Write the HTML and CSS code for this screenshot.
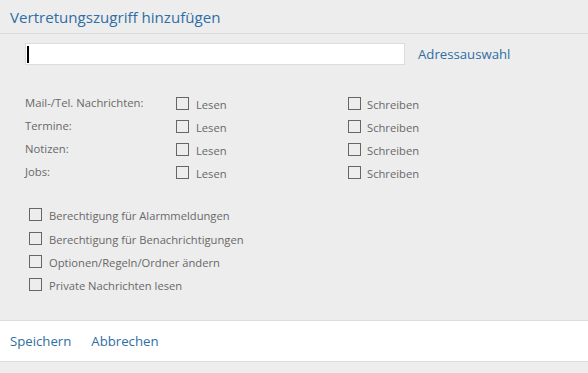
FILE: index.html
```html
<!DOCTYPE html>
<html lang="de">
<head>
    <meta charset="UTF-8">
    <title>Vertretungszugriff hinzufügen</title>
    <link rel="stylesheet" href="styles.css">
</head>
<body>
    <div class="dialog">
        <header class="title-bar">
            <h1>Vertretungszugriff hinzufügen</h1>
        </header>

        <!-- Person -->
        <div class="picker">
            <div class="input-box"><span class="caret"></span></div>
            <a class="link" href="#">Adressauswahl</a>
        </div>

        <!-- Folder permissions -->
        <div class="perm-grid">
            <span class="perm-label">Mail-/Tel. Nachrichten:</span>
            <label class="check"><span class="box"></span>Lesen</label>
            <label class="check"><span class="box"></span>Schreiben</label>

            <span class="perm-label">Termine:</span>
            <label class="check"><span class="box"></span>Lesen</label>
            <label class="check"><span class="box"></span>Schreiben</label>

            <span class="perm-label">Notizen:</span>
            <label class="check"><span class="box"></span>Lesen</label>
            <label class="check"><span class="box"></span>Schreiben</label>

            <span class="perm-label">Jobs:</span>
            <label class="check"><span class="box"></span>Lesen</label>
            <label class="check"><span class="box"></span>Schreiben</label>
        </div>

        <!-- Extra rights -->
        <div class="extras">
            <label class="check"><span class="box"></span>Berechtigung für Alarmmeldungen</label>
            <label class="check"><span class="box"></span>Berechtigung für Benachrichtigungen</label>
            <label class="check"><span class="box"></span>Optionen/Regeln/Ordner ändern</label>
            <label class="check"><span class="box"></span>Private Nachrichten lesen</label>
        </div>

        <footer class="actions">
            <a class="link" href="#">Speichern</a>
            <a class="link" href="#">Abbrechen</a>
        </footer>
    </div>
</body>
</html>
```

FILE: styles.css
```css
body {
    margin: 0;
    padding: 0;
    background-color: #ededed;
    font-family: "Open Sans", "Noto Sans", sans-serif;
    color: #686868;
}
.dialog {
    height: 373px;
    overflow: hidden;
}
.title-bar {
    height: 33px;
    border-bottom: 1px solid #dadada;
    padding: 0 10px;
    display: flex;
    align-items: center;
}
.title-bar h1 {
    margin: 0;
    font-size: 15.1px;
    font-weight: normal;
    color: #2f6ea4;
}
.link {
    color: #2f6ea4;
    text-decoration: none;
    font-size: 13.2px;
}

/* Person picker */
.picker {
    display: flex;
    align-items: center;
    margin-top: 9px;
    padding-left: 25px;
    gap: 13px;
}
.input-box {
    width: 378px;
    height: 20px;
    background: #fff;
    border: 1px solid #dcdcdc;
    display: flex;
    align-items: center;
}
.caret {
    width: 2px;
    height: 17px;
    margin-left: 1px;
    background: #000;
}

/* Permission rows */
.perm-grid {
    display: grid;
    grid-template-columns: 151px 172px auto;
    grid-auto-rows: 23px;
    align-items: center;
    margin-top: 28px;
    padding-left: 25px;
}
.perm-label {
    font-size: 11.3px;
    position: relative;
    top: -2px;
}
.check {
    display: flex;
    align-items: center;
    font-size: 11.2px;
}
.box {
    width: 11px;
    height: 11px;
    border: 1px solid #666;
    margin-right: 7px;
    flex-shrink: 0;
    position: relative;
    top: -1px;
}
.perm-grid .box {
    margin-right: 7px;
}
.perm-grid .check:nth-child(3n) .box {
    margin-right: 6px;
}

.extras {
    display: grid;
    grid-auto-rows: 23.4px;
    align-items: center;
    margin-top: 19px;
    padding-left: 29px;
}

/* Footer */
.actions {
    margin-top: 22px;
    height: 40px;
    background: #fff;
    border-top: 1px solid #dcdcdc;
    border-bottom: 1px solid #dcdcdc;
    display: flex;
    align-items: center;
    padding-left: 10px;
    gap: 20px;
}
```
